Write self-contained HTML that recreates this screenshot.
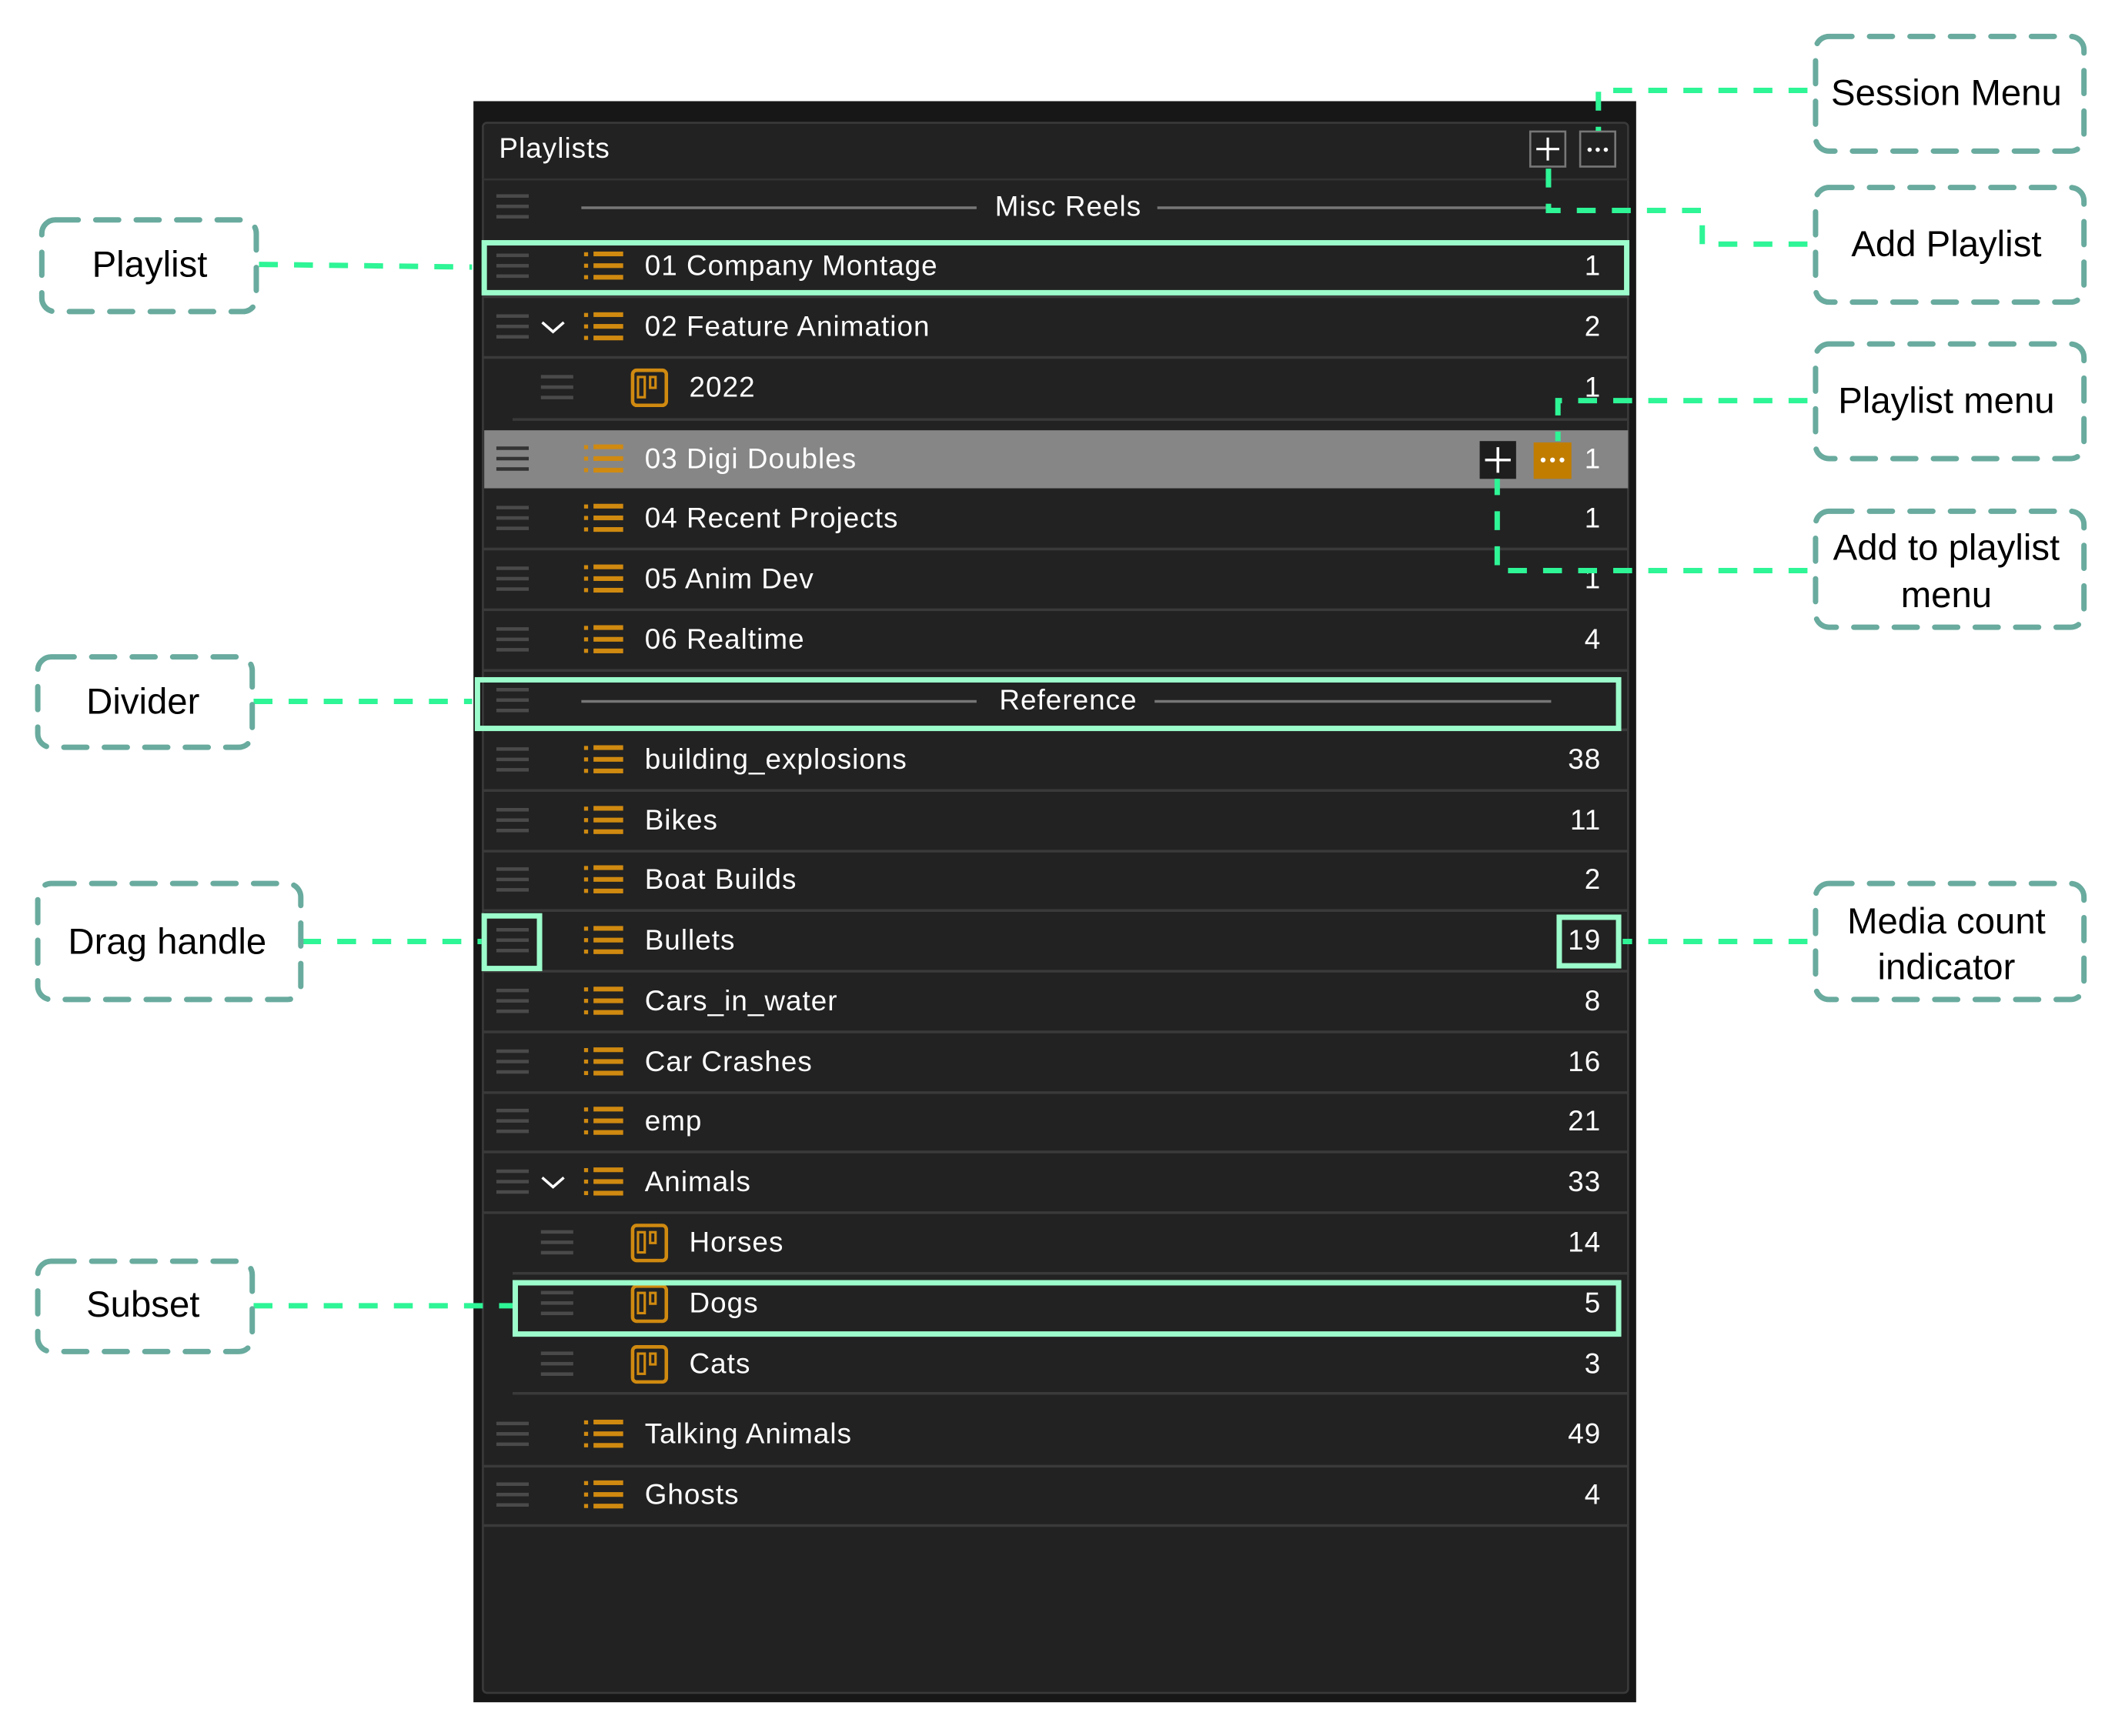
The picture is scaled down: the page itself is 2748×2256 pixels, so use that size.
<!DOCTYPE html>
<html><head><meta charset="utf-8"><style>
html,body{margin:0;padding:0;background:#fff;width:2748px;height:2256px;overflow:hidden}
svg{display:block}
.t{font-family:"Liberation Sans",sans-serif;fill:#fff;font-size:21px;letter-spacing:0.6px}
.a{font-family:"Liberation Sans",sans-serif;fill:#000;font-size:27px;text-anchor:middle}
.c{text-anchor:end}
</style></head><body>
<svg width="2748" height="2256" viewBox="0 0 1568 1287" preserveAspectRatio="none" xmlns="http://www.w3.org/2000/svg">
<defs>
<g id="dh"><rect x="368" y="-9" width="24" height="2.6" fill="#4a4a4a"/><rect x="368" y="-1.3" width="24" height="2.6" fill="#4a4a4a"/><rect x="368" y="6.4" width="24" height="2.6" fill="#4a4a4a"/></g>
<g id="li" fill="#d08a10"><rect x="433" y="-10" width="3" height="3"/><rect x="433" y="-1.5" width="3" height="3"/><rect x="433" y="7" width="3" height="3"/><rect x="440" y="-10.5" width="22" height="3.5"/><rect x="440" y="-1.8" width="22" height="3.5"/><rect x="440" y="6.8" width="22" height="3.5"/></g>
<g id="si"><rect x="469" y="-12.5" width="25" height="26" rx="3" fill="none" stroke="#d08a10" stroke-width="2.6"/><rect x="473" y="-7.5" width="5" height="15" fill="none" stroke="#d08a10" stroke-width="1.8"/><rect x="482" y="-7.5" width="4" height="8" fill="none" stroke="#d08a10" stroke-width="1.8"/></g>
<g id="ch"><path d="M402 -3 L410 4 L418 -3" fill="none" stroke="#fff" stroke-width="2"/></g>
</defs>
<rect x="351" y="75" width="862" height="1187" fill="#171717"/>
<rect x="358" y="91" width="849" height="1164" rx="3" fill="#222" stroke="#3a3a3a" stroke-width="1.5"/>
<line x1="358" y1="133" x2="1207" y2="133" stroke="#333" stroke-width="1.5"/>
<text class="t" x="370" y="117">Playlists</text>
<rect x="1134.5" y="97.5" width="26" height="26" fill="none" stroke="#777" stroke-width="1.5"/>
<path d="M1139 110.5h17M1147.5 102v17" stroke="#fff" stroke-width="1.8"/>
<rect x="1171.5" y="97.5" width="26" height="26" fill="none" stroke="#777" stroke-width="1.5"/>
<g fill="#fff"><circle cx="1178.5" cy="111" r="1.6"/><circle cx="1184.5" cy="111" r="1.6"/><circle cx="1190.5" cy="111" r="1.6"/></g>
<use href="#dh" y="153"/>
<line x1="431" y1="154" x2="724" y2="154" stroke="#777" stroke-width="2"/>
<line x1="858" y1="154" x2="1150" y2="154" stroke="#777" stroke-width="2"/>
<text class="t" x="792" y="160" text-anchor="middle">Misc Reels</text>
<rect x="359" y="319" width="848" height="43" fill="#868686"/>
<g stroke="#3a3a3a" stroke-width="2">
<line x1="358" y1="220" x2="1207" y2="220"/><line x1="358" y1="265" x2="1207" y2="265"/>
<line x1="380" y1="311" x2="1207" y2="311"/><line x1="358" y1="407" x2="1207" y2="407"/>
<line x1="358" y1="452" x2="1207" y2="452"/><line x1="358" y1="497" x2="1207" y2="497"/>
<line x1="358" y1="541" x2="1207" y2="541"/><line x1="358" y1="586" x2="1207" y2="586"/>
<line x1="358" y1="631" x2="1207" y2="631"/><line x1="358" y1="675" x2="1207" y2="675"/>
<line x1="358" y1="720" x2="1207" y2="720"/><line x1="358" y1="765" x2="1207" y2="765"/>
<line x1="358" y1="810" x2="1207" y2="810"/><line x1="358" y1="854" x2="1207" y2="854"/>
<line x1="358" y1="899" x2="1207" y2="899"/><line x1="380" y1="944" x2="1207" y2="944"/>
<line x1="380" y1="1033" x2="1207" y2="1033"/><line x1="358" y1="1087" x2="1207" y2="1087"/>
<line x1="358" y1="1131" x2="1207" y2="1131"/>
</g>
<use href="#dh" y="197"/><use href="#li" y="197"/><text class="t" x="478" y="204">01 Company Montage</text><text class="t c" x="1187" y="204">1</text>
<use href="#dh" y="242"/><use href="#ch" y="242"/><use href="#li" y="242"/><text class="t" x="478" y="249">02 Feature Animation</text><text class="t c" x="1187" y="249">2</text>
<use href="#dh" x="33" y="287"/><use href="#si" y="287"/><text class="t" x="511" y="294">2022</text><text class="t c" x="1187" y="294">1</text>
<g transform="translate(0,340)"><rect x="368" y="-9" width="24" height="2.6" fill="#333"/><rect x="368" y="-1.3" width="24" height="2.6" fill="#333"/><rect x="368" y="6.4" width="24" height="2.6" fill="#333"/></g>
<use href="#li" y="340"/><text class="t" x="478" y="347">03 Digi Doubles</text><text class="t c" x="1187" y="347">1</text>
<rect x="1097" y="327" width="27" height="28" fill="#1e1e1e"/><path d="M1101 341h19M1110.5 331.5v19" stroke="#fff" stroke-width="2"/>
<rect x="1137" y="328" width="28" height="27" fill="#c07d00"/><g fill="#fff"><circle cx="1144" cy="341" r="1.8"/><circle cx="1151" cy="341" r="1.8"/><circle cx="1158" cy="341" r="1.8"/></g>
<use href="#dh" y="384"/><use href="#li" y="384"/><text class="t" x="478" y="391">04 Recent Projects</text><text class="t c" x="1187" y="391">1</text>
<use href="#dh" y="429"/><use href="#li" y="429"/><text class="t" x="478" y="436">05 Anim Dev</text><text class="t c" x="1187" y="436">1</text>
<use href="#dh" y="474"/><use href="#li" y="474"/><text class="t" x="478" y="481">06 Realtime</text><text class="t c" x="1187" y="481">4</text>
<use href="#dh" y="519"/>
<line x1="431" y1="520" x2="724" y2="520" stroke="#777" stroke-width="2"/>
<line x1="856" y1="520" x2="1150" y2="520" stroke="#777" stroke-width="2"/>
<text class="t" x="792" y="526" text-anchor="middle">Reference</text>
<use href="#dh" y="563"/><use href="#li" y="563"/><text class="t" x="478" y="570">building_explosions</text><text class="t c" x="1187" y="570">38</text>
<use href="#dh" y="608"/><use href="#li" y="608"/><text class="t" x="478" y="615">Bikes</text><text class="t c" x="1187" y="615">11</text>
<use href="#dh" y="652"/><use href="#li" y="652"/><text class="t" x="478" y="659">Boat Builds</text><text class="t c" x="1187" y="659">2</text>
<use href="#dh" y="697"/><use href="#li" y="697"/><text class="t" x="478" y="704">Bullets</text><text class="t c" x="1187" y="704">19</text>
<use href="#dh" y="742"/><use href="#li" y="742"/><text class="t" x="478" y="749">Cars_in_water</text><text class="t c" x="1187" y="749">8</text>
<use href="#dh" y="787"/><use href="#li" y="787"/><text class="t" x="478" y="794">Car Crashes</text><text class="t c" x="1187" y="794">16</text>
<use href="#dh" y="831"/><use href="#li" y="831"/><text class="t" x="478" y="838">emp</text><text class="t c" x="1187" y="838">21</text>
<use href="#dh" y="876"/><use href="#ch" y="876"/><use href="#li" y="876"/><text class="t" x="478" y="883">Animals</text><text class="t c" x="1187" y="883">33</text>
<use href="#dh" x="33" y="921"/><use href="#si" y="921"/><text class="t" x="511" y="928">Horses</text><text class="t c" x="1187" y="928">14</text>
<use href="#dh" x="33" y="966"/><use href="#si" y="966"/><text class="t" x="511" y="973">Dogs</text><text class="t c" x="1187" y="973">5</text>
<use href="#dh" x="33" y="1011"/><use href="#si" y="1011"/><text class="t" x="511" y="1018">Cats</text><text class="t c" x="1187" y="1018">3</text>
<use href="#dh" y="1063"/><use href="#li" y="1063"/><text class="t" x="478" y="1070">Talking Animals</text><text class="t c" x="1187" y="1070">49</text>
<use href="#dh" y="1108"/><use href="#li" y="1108"/><text class="t" x="478" y="1115">Ghosts</text><text class="t c" x="1187" y="1115">4</text>
<g fill="none" stroke="#9cfccb" stroke-width="4">
<rect x="359" y="180" width="847" height="37"/>
<rect x="354" y="504" width="846" height="36"/>
<rect x="359" y="679" width="41" height="39"/>
<rect x="1156" y="680" width="44" height="36"/>
<rect x="382" y="951" width="818" height="38"/>
</g>
<g fill="none" stroke="#2ef596" stroke-width="4" stroke-dasharray="14 12">
<path d="M1340 67H1185V97"/>
<path d="M1340 181H1262V156H1148V125"/>
<path d="M1340 297H1155V327"/>
<path d="M1340 423H1110V355"/>
<path d="M1340 698H1203"/>
<path d="M192 196L350 198"/>
<path d="M188 520H350"/>
<path d="M224 698H357"/>
<path d="M188 968H380"/>
</g>
<g fill="none" stroke="#69ab9e" stroke-width="4" stroke-dasharray="17 13" stroke-linecap="round">
<rect x="1346" y="27" width="199" height="85" rx="10"/>
<rect x="1346" y="139" width="199" height="85" rx="10"/>
<rect x="1346" y="255" width="199" height="85" rx="10"/>
<rect x="1346" y="379" width="199" height="86" rx="10"/>
<rect x="1346" y="655" width="199" height="86" rx="10"/>
<rect x="31" y="163" width="159" height="68" rx="10"/>
<rect x="28" y="487" width="159" height="67" rx="10"/>
<rect x="28" y="655" width="195" height="86" rx="10"/>
<rect x="28" y="935" width="159" height="67" rx="10"/>
</g>
<text class="a" x="1443" y="78">Session Menu</text>
<text class="a" x="1443" y="190">Add Playlist</text>
<text class="a" x="1443" y="306">Playlist menu</text>
<text class="a" x="1443" y="415">Add to playlist</text>
<text class="a" x="1443" y="450">menu</text>
<text class="a" x="1443" y="692">Media count</text>
<text class="a" x="1443" y="726">indicator</text>
<text class="a" x="111" y="205">Playlist</text>
<text class="a" x="106" y="529">Divider</text>
<text class="a" x="124" y="707">Drag handle</text>
<text class="a" x="106" y="976">Subset</text>
</svg>
</body></html>
